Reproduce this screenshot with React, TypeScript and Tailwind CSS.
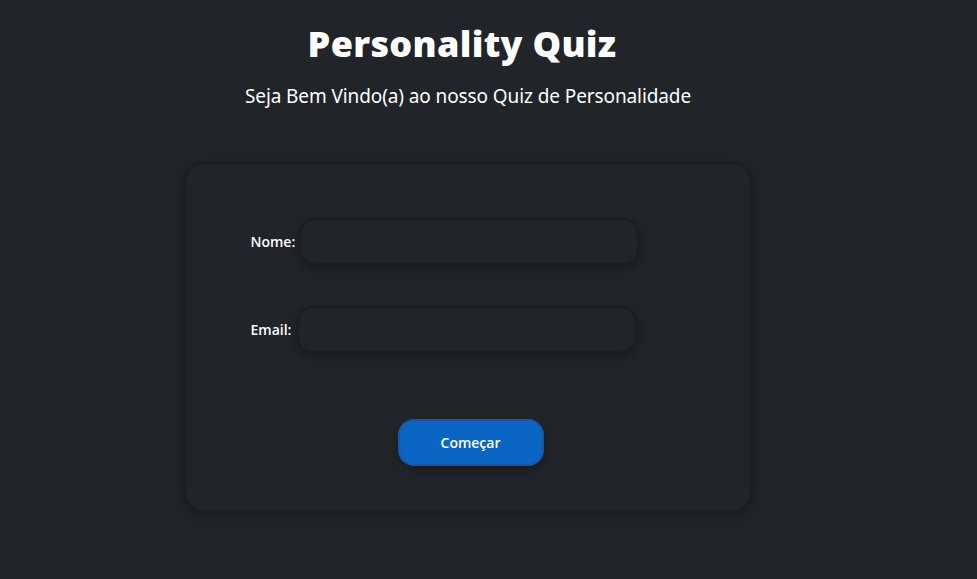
export default function App() {
  return (
    <div className="min-h-[579px] w-full bg-[#212429] font-['Open_Sans',sans-serif] text-white">
      <div className="w-[933px] flex flex-col items-center pt-[21px]">
        <h1 className="mr-[9px] text-[36px] leading-[46px] font-extrabold tracking-[0.3px]">
          Personality Quiz
        </h1>
        <p className="mt-[17px] ml-[3px] text-[19px] leading-[24px] tracking-[-0.1px] font-['Noto_Sans',sans-serif]">
          Seja Bem Vindo(a) ao nosso Quiz de Personalidade
        </p>

        <div className="mt-[54px] ml-[2px] w-[568px] h-[350px] rounded-[20px] border-2 border-[#1c1e22] bg-[#212429] shadow-[0_4px_12px_rgba(0,0,0,0.25)] flex flex-col">
          <div className="pl-[65px] pt-[54px] flex flex-col">
            <div className="flex items-center">
              <label className="text-[14px] font-semibold mr-[4px]">Nome:</label>
              <input
                type="text"
                className="shrink-0 w-[340px] h-[47px] rounded-[16px] border-2 border-[#1c1e22] bg-[#212429] shadow-[0_4px_8px_rgba(0,0,0,0.25)] outline-none px-3 text-white"
              />
            </div>
            <div className="flex items-center mt-[41px]">
              <label className="text-[14px] font-semibold mr-[6px]">Email:</label>
              <input
                type="email"
                className="shrink-0 w-[340px] h-[47px] rounded-[16px] border-2 border-[#1c1e22] bg-[#212429] shadow-[0_4px_8px_rgba(0,0,0,0.25)] outline-none px-3 text-white"
              />
            </div>
          </div>
          <div className="flex justify-center pl-[6px] mt-[66px]">
            <button className="w-[146px] h-[47px] rounded-[16px] border-2 border-[#1a57a3] bg-[#0a66c2] text-[14px] font-semibold text-white shadow-[0_4px_8px_rgba(0,0,0,0.25)]">
              Começar
            </button>
          </div>
        </div>
      </div>
    </div>
  );
}
